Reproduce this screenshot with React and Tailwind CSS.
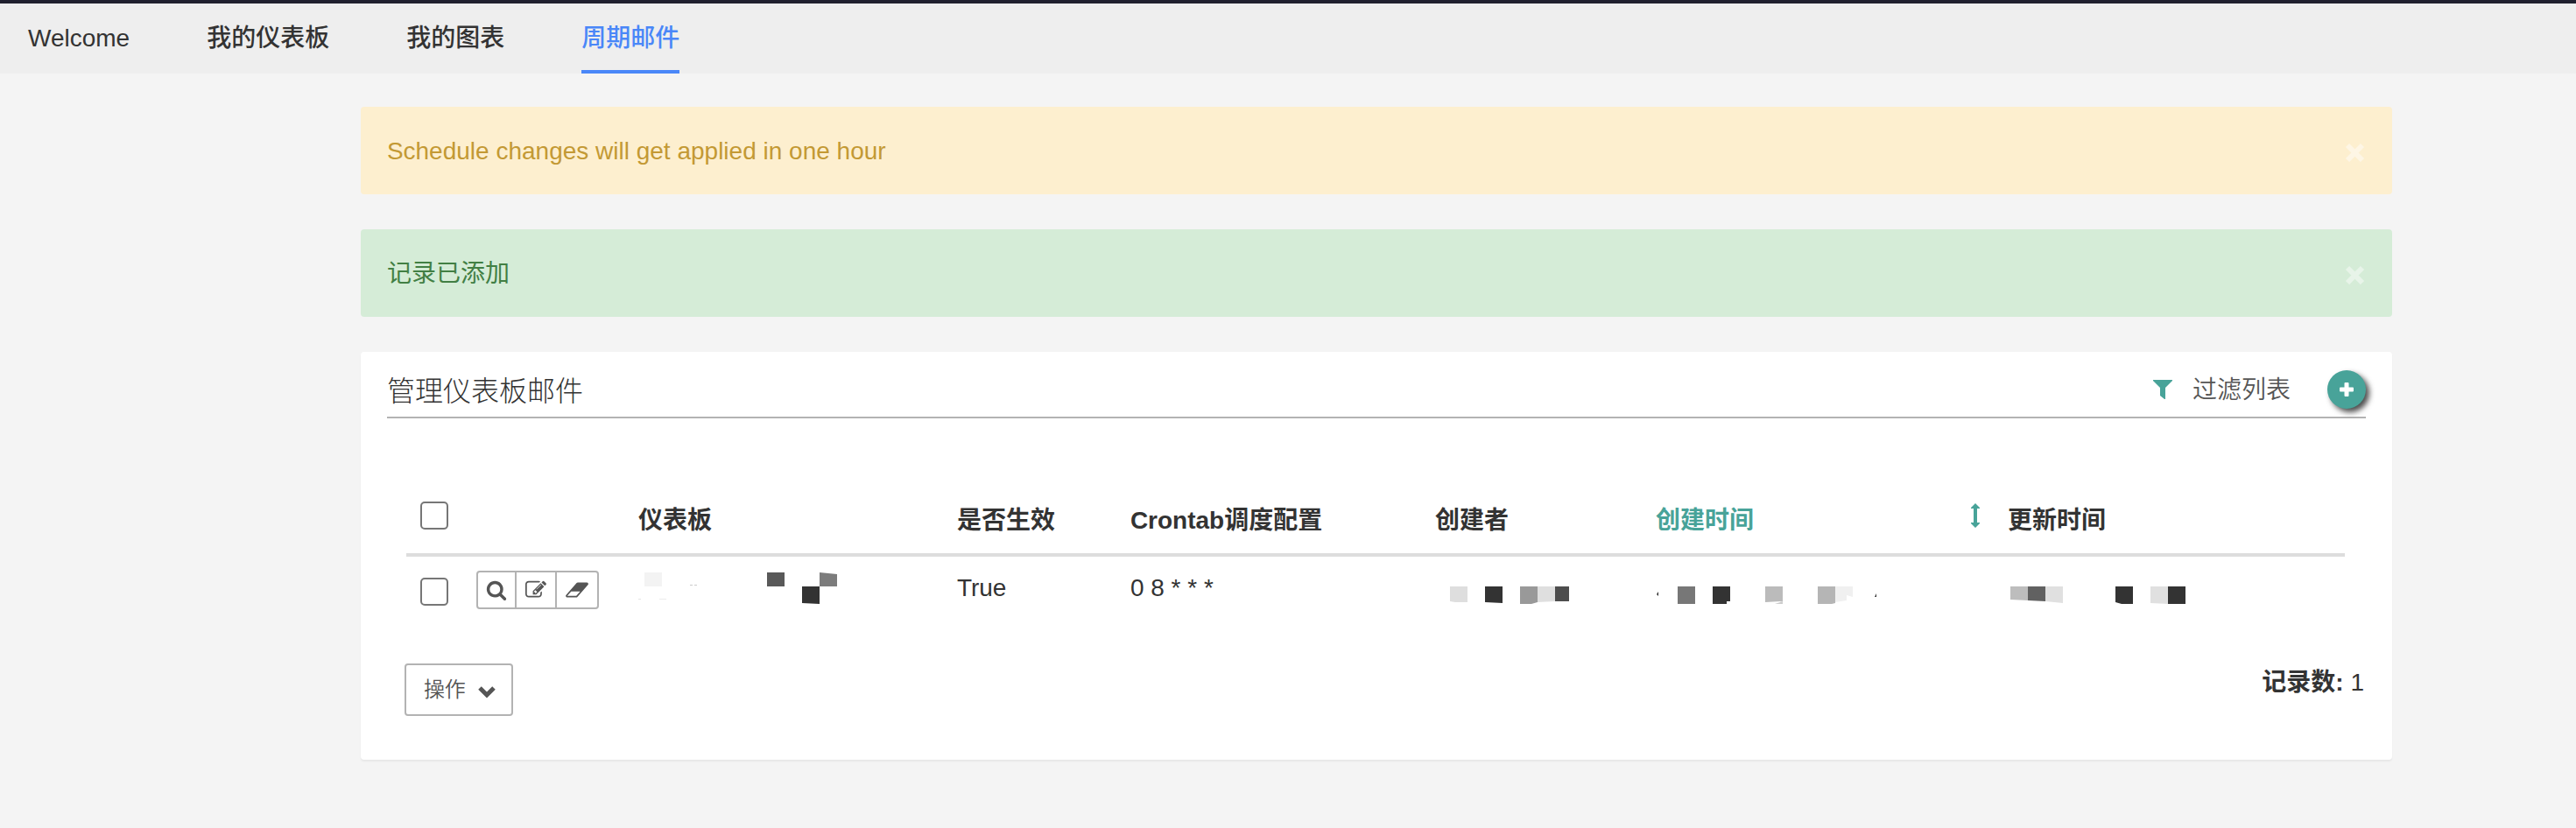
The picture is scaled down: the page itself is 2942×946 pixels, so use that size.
const FONT = 'font-["Liberation_Sans","Noto_Sans_CJK_SC",sans-serif]';

const ICONS = {
  search: {
    box: '0 0 1792 1792',
    d: 'M1216 832q0-185-131.5-316.5t-316.5-131.5-316.5 131.5-131.5 316.5 131.5 316.5 316.5 131.5 316.5-131.5 131.5-316.5zm512 832q0 52-38 90t-90 38q-54 0-90-38l-343-342q-179 124-399 124-143 0-273.5-55.5t-225-150-150-225-55.5-273.5 55.5-273.5 150-225 225-150 273.5-55.5 273.5 55.5 225 150 150 225 55.5 273.5q0 220-124 399l343 343q37 37 37 90z',
  },
  edit: {
    box: '0 0 1792 1792',
    d: 'M888 1184l116-116-152-152-116 116v56h96v96h56zm440-720q-16-16-33 1l-350 350q-17 17-1 33t33-1l350-350q17-17 1-33zm80 594v190q0 119-84.5 203.5t-203.5 84.5h-832q-119 0-203.5-84.5t-84.5-203.5v-832q0-119 84.5-203.5t203.5-84.5h832q63 0 117 25 15 7 18 23 3 17-9 29l-49 49q-14 14-32 8-23-6-45-6h-832q-66 0-113 47t-47 113v832q0 66 47 113t113 47h832q66 0 113-47t47-113v-126q0-13 9-22l64-64q15-15 35-7t20 29zm-96-738l288 288-672 672h-288v-288zm444 132l-92 92-288-288 92-92q28-28 68-28t68 28l152 152q28 28 28 68t-28 68z',
  },
  eraser: {
    box: '64 0 1920 1792',
    d: 'M960 1408l336-384h-768l-336 384h768zm1013-1077q15 34 9.5 71.5t-30.5 65.5l-896 1024q-38 44-96 44h-768q-38 0-69.5-20.5t-47.5-54.5q-15-34-9.5-71.5t30.5-65.5l896-1024q38-44 96-44h768q38 0 69.5 20.5t47.5 54.5z',
  },
};

function Icon({ name, className }) {
  const icon = ICONS[name];
  return (
    <svg viewBox={icon.box} className={className} fill="currentColor" aria-hidden="true">
      <path d={icon.d} />
    </svg>
  );
}

const TABS = [
  { label: 'Welcome' },
  { label: '我的仪表板' },
  { label: '我的图表' },
  { label: '周期邮件', active: true },
];

function Nav() {
  return (
    <header className="border-t-4 border-[#20202f] bg-[#eeeeee]">
      <nav className="flex gap-[88px] px-8">
        {TABS.map((tab) => (
          <a
            key={tab.label}
            href="#"
            className={
              'flex h-20 items-center border-b-4 pt-1 font-medium ' +
              (tab.active ? 'border-[#4a87f8] text-[#4a87f8]' : 'border-transparent text-[#333333]')
            }
          >
            {tab.label}
          </a>
        ))}
      </nav>
    </header>
  );
}

function Alert({ tone, children }) {
  return (
    <div role="alert" className={'flex h-[100px] items-center justify-between rounded-sm px-[30px] pt-0.5 ' + tone}>
      <span>{children}</span>
      <button type="button" aria-label="关闭" className="text-white/45">
        <svg viewBox="0 0 24 24" className="size-6" stroke="currentColor" strokeWidth="6" aria-hidden="true">
          <path d="M3 5 L20 22 M20 5 L3 22" />
        </svg>
      </button>
    </div>
  );
}

function Checkbox({ label }) {
  return (
    <input
      type="checkbox"
      aria-label={label}
      className="block size-8 appearance-none rounded-[5px] border-2 border-[#767676] bg-white"
    />
  );
}

/* Redacted values: grey blocks given as polygon points inside a 40px tall strip. */
function Redacted({ width, shapes }) {
  return (
    <svg width={width} height="40" viewBox={`0 0 ${width} 40`} aria-hidden="true">
      {shapes.map(([points, fill]) => (
        <polygon key={points} points={points} fill={fill} />
      ))}
    </svg>
  );
}

const DASHBOARD = [
  ['7,2 27,2 27,18 7,18', '#f3f3f3'],
  ['59,16 62,16 62,17 59,17', '#cccccc'],
  ['64,16 67,16 67,17 64,17', '#cccccc'],
  ['0,32 3,32 3,33 0,33', '#e4e4e4'],
  ['24,32 32,32 32,33 24,33', '#ececec'],
  ['147,2 167,2 167,18 147,18', '#595959'],
  ['207,2 227,4 227,18 207,18', '#7c7c7c'],
  ['187,18 207,18 207,38 187,37', '#333333'],
];
const CREATOR = [
  ['17,18 37,18 37,36 23,36 17,35', '#dedede'],
  ['57,18 77,18 77,37 57,36', '#333333'],
  ['97,18 117,18 117,36 110,38 97,38', '#999999'],
  ['117,18 137,18 137,35 117,36', '#dfdfdf'],
  ['137,18 153,18 153,35 137,35', '#4d4d4d'],
];
const CREATED = [
  ['1,27 3,24 3,29', '#333333'],
  ['25,18 45,18 45,38 25,38', '#777777'],
  ['65,18 85,18 85,35 81,35 81,38 65,38', '#333333'],
  ['125,18 145,18 145,35 125,36', '#bbbbbb'],
  ['136,38 145,35 145,38', '#cccccc'],
  ['185,18 205,18 205,37 201,38 185,38', '#b5b5b5'],
  ['205,18 225,18 225,30 218,28 218,34 205,36', '#f0f0f0'],
  ['250,30 252,26 252,30', '#333333'],
];
const UPDATED = [
  ['3,18 23,18 23,34 3,33', '#bdbdbd'],
  ['23,18 43,18 43,35 23,34', '#616161'],
  ['43,18 63,18 63,37 43,35', '#e0e0e0'],
  ['123,18 143,18 143,38 130,38 123,36', '#333333'],
  ['163,18 183,18 183,38 163,37', '#e0e0e0'],
  ['183,18 203,18 203,38 183,38', '#333333'],
];

const COLUMNS = [64, 185, 364, 198, 348, 252, 402, 401];
const TOTAL = COLUMNS.reduce((sum, w) => sum + w, 0);

function RowActions() {
  const button = 'flex items-center justify-center ';
  return (
    <div className="flex h-11 w-[140px] divide-x-2 divide-[#b3b3b3] rounded-sm border-2 border-[#b3b3b3] text-[#555555]">
      <button type="button" aria-label="查看" className={button + 'w-11'}>
        <Icon name="search" className="size-6" />
      </button>
      <button type="button" aria-label="编辑" className={button + 'w-[46px]'}>
        <Icon name="edit" className="size-6" />
      </button>
      <button type="button" aria-label="删除" className={button + 'flex-1'}>
        <Icon name="eraser" className="h-6 w-[26px]" />
      </button>
    </div>
  );
}

function MailTable() {
  return (
    <table className="w-full table-fixed text-left">
      <colgroup>
        {COLUMNS.map((w, i) => (
          <col key={i} style={{ width: `${(w / TOTAL) * 100}%` }} />
        ))}
      </colgroup>
      <thead>
        <tr className="h-[82px] border-b-4 border-[#dddddd]">
          <th className="px-4 pb-1.5"><Checkbox label="全选" /></th>
          <th aria-label="操作" />
          <th className="px-4 pt-1.5">仪表板</th>
          <th className="px-4 pt-1.5">是否生效</th>
          <th className="px-4 pt-1.5">Crontab调度配置</th>
          <th className="px-4 pt-1.5">创建者</th>
          <th className="px-4 pt-1.5">
            <a href="#" className="flex items-center justify-between text-[#48a399]">
              创建时间
              <svg viewBox="0 0 10 28" className="-mt-3 h-7 w-[10px]" fill="currentColor" aria-hidden="true">
                <path d="M5 0 L10 5 V6 H7 V22 H10 V23 L5 28 L0 23 V22 H3 V6 H0 V5 Z" />
              </svg>
            </a>
          </th>
          <th className="px-4 pt-1.5">更新时间</th>
        </tr>
      </thead>
      <tbody>
        <tr className="h-[78px] align-top">
          <td className="px-4 pt-6"><Checkbox label="选择记录" /></td>
          <td className="px-4 pt-4"><RowActions /></td>
          <td className="px-4 pt-4"><Redacted width={240} shapes={DASHBOARD} /></td>
          <td className="px-4 pt-4">True</td>
          <td className="px-4 pt-4">0 8 * * *</td>
          <td className="px-4 pt-4"><Redacted width={200} shapes={CREATOR} /></td>
          <td className="px-4 pt-4"><Redacted width={280} shapes={CREATED} /></td>
          <td className="px-4 pt-4"><Redacted width={240} shapes={UPDATED} /></td>
        </tr>
      </tbody>
    </table>
  );
}

function Panel() {
  return (
    <section className="rounded-sm bg-white px-[30px] pb-[50px] shadow-[0_2px_2px_rgba(0,0,0,0.05)]">
      <div className="flex h-[76px] items-center justify-between border-b-2 border-[#b3b3b3] pt-3">
        <h1 className="pt-1 text-[32px] leading-10 font-light text-[#333333]">管理仪表板邮件</h1>
        <div className="flex items-center">
          <button type="button" className="flex items-center gap-[22px] font-[350] text-[#555555]">
            <svg viewBox="0 0 24 24" className="size-6 text-[#48a399]" fill="currentColor" aria-hidden="true">
              <path d="M1 1 H23 V2 L15 10 V23 H14 L9 19 V10 L1 2 Z" />
            </svg>
            <span className="pt-0.5">过滤列表</span>
          </button>
          <button
            type="button"
            aria-label="添加"
            className="ml-[42px] flex size-11 items-center justify-center rounded-full bg-[#48a399] text-white shadow-[4px_4px_6px_rgba(0,0,0,0.7)]"
          >
            <svg viewBox="0 0 16 16" className="size-4" fill="currentColor" aria-hidden="true">
              <path d="M5.5 1 Q5.5 0 6.5 0 H9.5 Q10.5 0 10.5 1 V5.5 H15 Q16 5.5 16 6.5 V9.5 Q16 10.5 15 10.5 H10.5 V15 Q10.5 16 9.5 16 H6.5 Q5.5 16 5.5 15 V10.5 H1 Q0 10.5 0 9.5 V6.5 Q0 5.5 1 5.5 H5.5 Z" />
            </svg>
          </button>
        </div>
      </div>
      <div className="pt-[74px] pr-6 pl-[22px]">
        <MailTable />
      </div>
      <div className="flex items-start justify-between pt-[46px] pr-0.5 pl-5">
        <button
          type="button"
          className="flex h-[60px] items-center gap-[14px] rounded-sm border-2 border-[#b3b3b3] pr-[18px] pl-5 text-2xl font-[350] text-[#555555]"
        >
          操作
          <svg viewBox="0 0 20 20" className="mt-1 w-5" fill="none" stroke="currentColor" strokeWidth="5" aria-hidden="true">
            <path d="M2 6 L10 14 L18 6" />
          </svg>
        </button>
        <p className="pt-0.5"><strong>记录数:</strong> 1</p>
      </div>
    </section>
  );
}

export default function App() {
  return (
    <div lang="zh-CN" className={'min-h-screen bg-[#f4f4f4] pb-10 text-[28px] leading-10 text-[#333333] ' + FONT}>
      <Nav />
      <main className="mr-[210px] ml-[14%] flex flex-col gap-10 pt-[38px]">
        <Alert tone="bg-[#fdefcf] text-[#c39934]">Schedule changes will get applied in one hour</Alert>
        <Alert tone="bg-[#d5ecd7] text-[#427f44]">记录已添加</Alert>
        <Panel />
      </main>
    </div>
  );
}
